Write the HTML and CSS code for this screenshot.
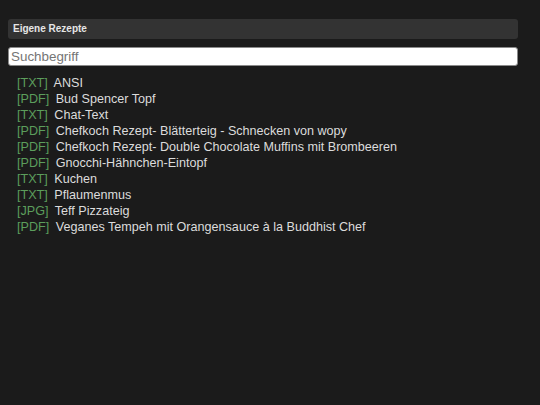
FILE: index.html
```html
<!DOCTYPE html>
<html lang="de">
<head>
<meta charset="utf-8">
<title>Eigene Rezepte</title>
<link rel="stylesheet" href="styles.css">
</head>
<body>
<div class="page">
  <div class="header">Eigene Rezepte</div>
  <input class="search" type="text" placeholder="Suchbegriff">
  <ul class="list">
    <li><span class="type">[TXT]</span> ANSI</li>
    <li><span class="type">[PDF]</span> Bud Spencer Topf</li>
    <li><span class="type">[TXT]</span> Chat-Text</li>
    <li><span class="type">[PDF]</span> Chefkoch Rezept- Blätterteig - Schnecken von wopy</li>
    <li><span class="type">[PDF]</span> Chefkoch Rezept- Double Chocolate Muffins mit Brombeeren</li>
    <li><span class="type">[PDF]</span> Gnocchi-Hähnchen-Eintopf</li>
    <li><span class="type">[TXT]</span> Kuchen</li>
    <li><span class="type">[TXT]</span> Pflaumenmus</li>
    <li><span class="type">[JPG]</span> Teff Pizzateig</li>
    <li><span class="type">[PDF]</span> Veganes Tempeh mit Orangensauce à la Buddhist Chef</li>
  </ul>
</div>
</body>
</html>
```
FILE: styles.css
```css
html, body {
  margin: 0;
  padding: 0;
  background: #1b1b1b;
  height: 100%;
}
body {
  font-family: "Liberation Sans", Arial, sans-serif;
  color: #dcdcdc;
}
.page {
  padding: 19px 22px 0 8px;
  display: flex;
  flex-direction: column;
}
.header {
  height: 20px;
  line-height: 20px;
  background: #333333;
  border-radius: 3px;
  padding-left: 5px;
  font-size: 10px;
  font-weight: bold;
  color: #e6e6e6;
}
.search {
  margin: 8px 0 0 0;
  box-sizing: border-box;
  height: 19px;
  width: 100%;
  padding: 0 2px;
  border: 1px solid #8a8a8a;
  border-radius: 3px;
  background: #ffffff;
  font-family: "Liberation Sans", Arial, sans-serif;
  font-size: 13.4px;
  color: #222;
  outline: none;
}
.search::placeholder {
  color: #757575;
}
.list {
  list-style: none;
  margin: 9px 0 0 0;
  padding: 0 0 0 9px;
  font-size: 12.6px;
  line-height: 16px;
}
.type {
  color: #5c9e5c;
  margin-right: 3px;
}
```
